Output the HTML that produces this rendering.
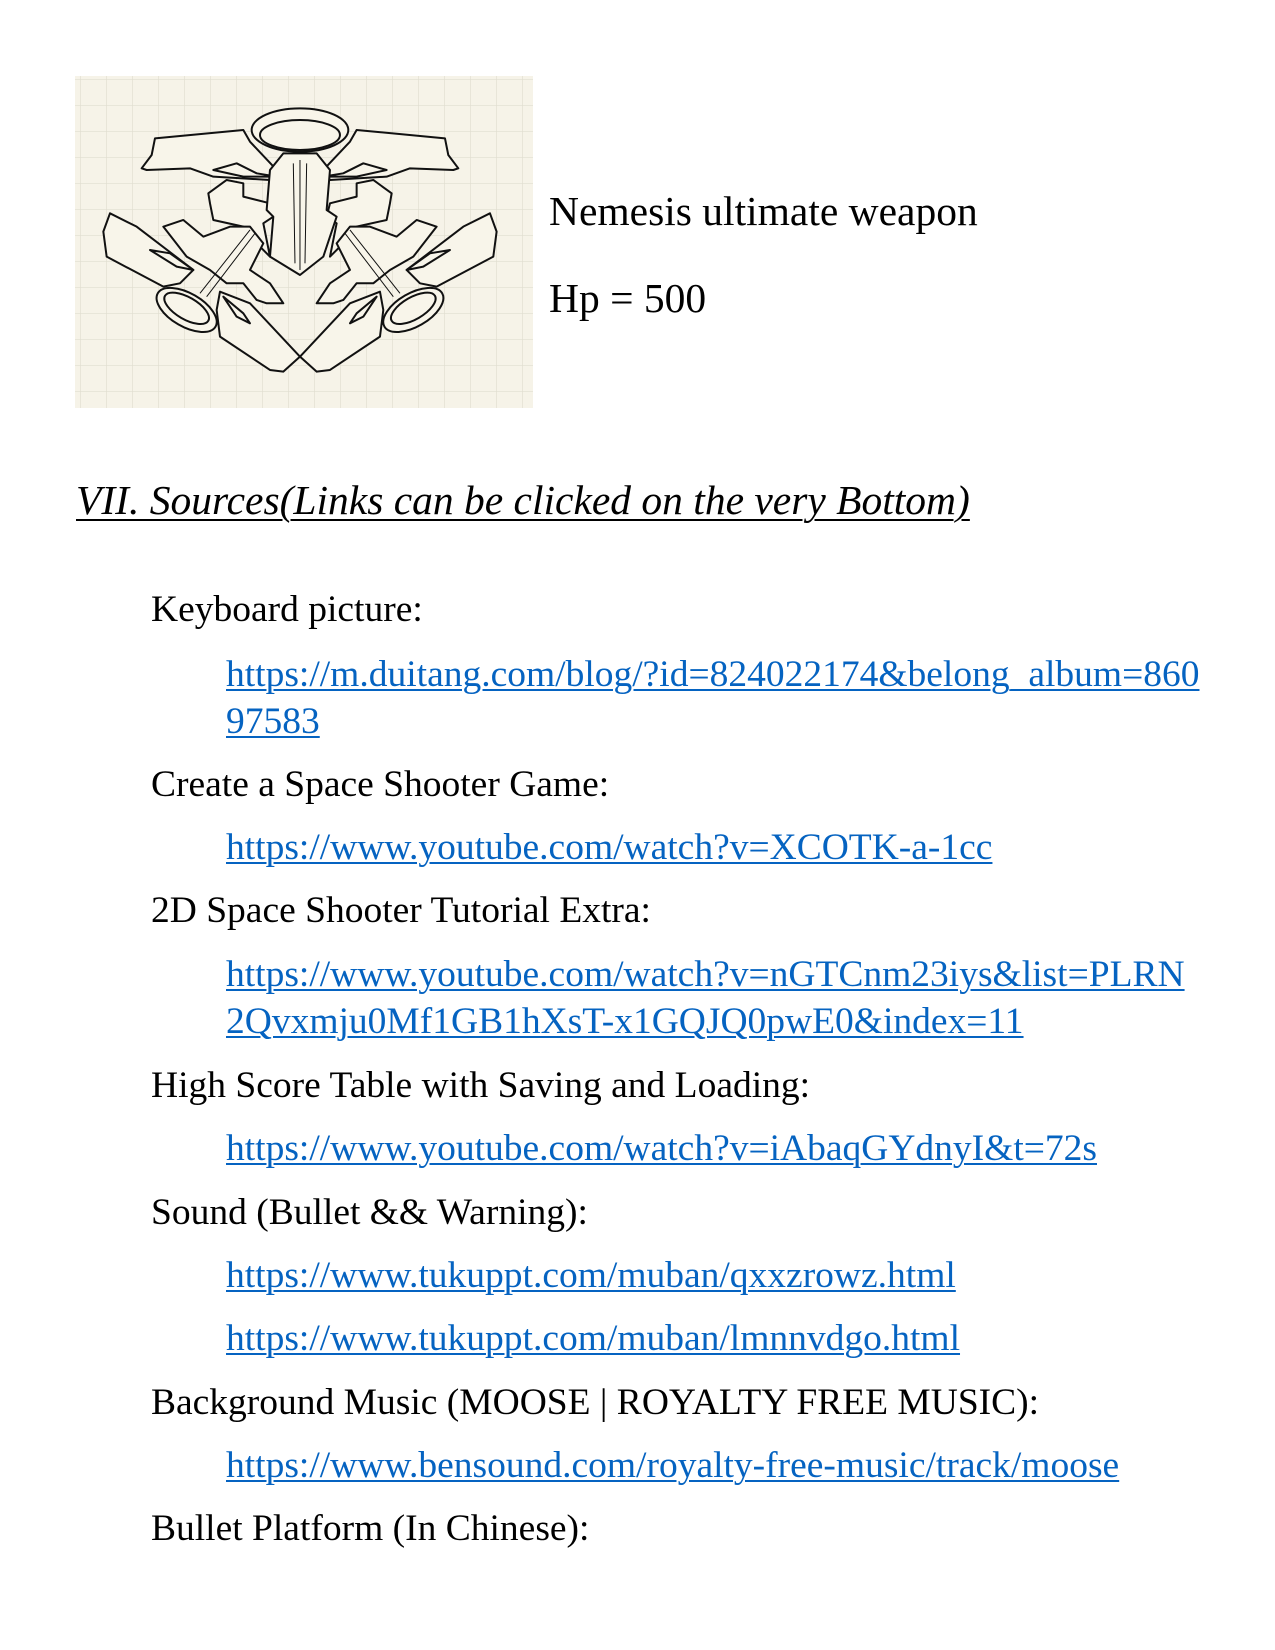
<!DOCTYPE html>
<html><head><meta charset="utf-8"><style>
html,body{margin:0;padding:0;background:#fff;}
body{width:1275px;height:1650px;position:relative;overflow:hidden;font-family:"Liberation Serif",serif;color:#000;}
.t{position:absolute;white-space:nowrap;line-height:1;font-size:37.5px;}
.l{color:#0563c1;text-decoration:underline;text-decoration-thickness:2px;text-underline-offset:3px;}
</style></head><body>
<svg style="position:absolute;left:75px;top:76px" width="458" height="332" viewBox="0 0 458 332">
<defs><pattern id="g" width="26" height="26" patternUnits="userSpaceOnUse" x="6" y="4"><path d="M26 0V26M0 26H26" stroke="#e0ddd0" stroke-width="1.3" fill="none"/></pattern></defs>
<rect width="458" height="332" fill="#f6f3e8"/><rect width="458" height="332" fill="url(#g)"/>
<g transform="translate(-5,-6) scale(0.3333)" fill="#f8f5ea" stroke="#111" stroke-width="6" stroke-linejoin="round">
<g id="half">
<polygon points="255,205 520,180 540,215 620,300 600,330 430,320 360,295 230,300 215,295 245,255"/>
<polygon points="430,300 500,280 560,310 620,320 520,320"/>
<polygon points="415,370 470,330 520,340 520,380 600,400 610,440 580,460 600,560 560,520 520,470 430,450 420,400"/>
<polygon points="120,430 200,470 370,600 330,640 280,650 110,560 100,485"/>
<polygon points="240,540 300,550 370,600 320,590"/>
<polygon points="280,470 340,450 400,500 480,470 540,470 580,520 540,600 600,640 640,700 590,700 560,690 520,640 470,640 420,600 350,560"/>
<ellipse cx="350" cy="720" rx="100" ry="50" transform="rotate(30 350 720)"/>
<ellipse cx="350" cy="715" rx="75" ry="33" transform="rotate(30 350 715)"/>
<polygon points="450,665 540,700 690,860 640,905 600,900 450,800 440,720"/>
<polygon points="460,680 520,730 540,760 500,740"/>
<line x1="390" y1="670" x2="540" y2="480" stroke-width="3"/>
<line x1="410" y1="680" x2="555" y2="490" stroke-width="3"/>
</g>
<use href="#half" transform="translate(1380,0) scale(-1,1)"/>
<polygon points="600,300 640,250 740,250 780,300 770,420 800,440 760,560 690,615 600,560 610,440 590,420"/>
<ellipse cx="690" cy="180" rx="145" ry="65"/>
<ellipse cx="690" cy="195" rx="120" ry="45"/>
<line x1="670" y1="280" x2="675" y2="580" stroke-width="3"/>
<line x1="690" y1="270" x2="690" y2="600" stroke-width="3"/>
<line x1="710" y1="280" x2="705" y2="580" stroke-width="3"/>
</g>
</svg>
<div class="t" style="left:549px;top:191px;font-size:41.5px">Nemesis ultimate weapon</div>
<div class="t" style="left:549px;top:278px;font-size:41.5px">Hp = 500</div>
<div class="t" style="left:76px;top:480px;font-size:41.5px;font-style:italic;text-decoration:underline;text-decoration-thickness:2px;text-underline-offset:5px">VII. Sources(Links can be clicked on the very Bottom)</div>
<div class="t" style="left:151px;top:591px">Keyboard picture:</div>
<div class="t l" style="left:226px;top:656px">https://m.duitang.com/blog/?id=824022174&amp;belong_album=860</div>
<div class="t l" style="left:226px;top:703px">97583</div>
<div class="t" style="left:151px;top:766px">Create a Space Shooter Game:</div>
<div class="t l" style="left:226px;top:829px">https://www.youtube.com/watch?v=XCOTK-a-1cc</div>
<div class="t" style="left:151px;top:892px">2D Space Shooter Tutorial Extra:</div>
<div class="t l" style="left:226px;top:956px">https://www.youtube.com/watch?v=nGTCnm23iys&amp;list=PLRN</div>
<div class="t l" style="left:226px;top:1003px">2Qvxmju0Mf1GB1hXsT-x1GQJQ0pwE0&amp;index=11</div>
<div class="t" style="left:151px;top:1067px">High Score Table with Saving and Loading:</div>
<div class="t l" style="left:226px;top:1130px">https://www.youtube.com/watch?v=iAbaqGYdnyI&amp;t=72s</div>
<div class="t" style="left:151px;top:1194px">Sound (Bullet &amp;&amp; Warning):</div>
<div class="t l" style="left:226px;top:1257px">https://www.tukuppt.com/muban/qxxzrowz.html</div>
<div class="t l" style="left:226px;top:1320px">https://www.tukuppt.com/muban/lmnnvdgo.html</div>
<div class="t" style="left:151px;top:1384px">Background Music (MOOSE | ROYALTY FREE MUSIC):</div>
<div class="t l" style="left:226px;top:1447px">https://www.bensound.com/royalty-free-music/track/moose</div>
<div class="t" style="left:151px;top:1510px">Bullet Platform (In Chinese):</div>
</body></html>
